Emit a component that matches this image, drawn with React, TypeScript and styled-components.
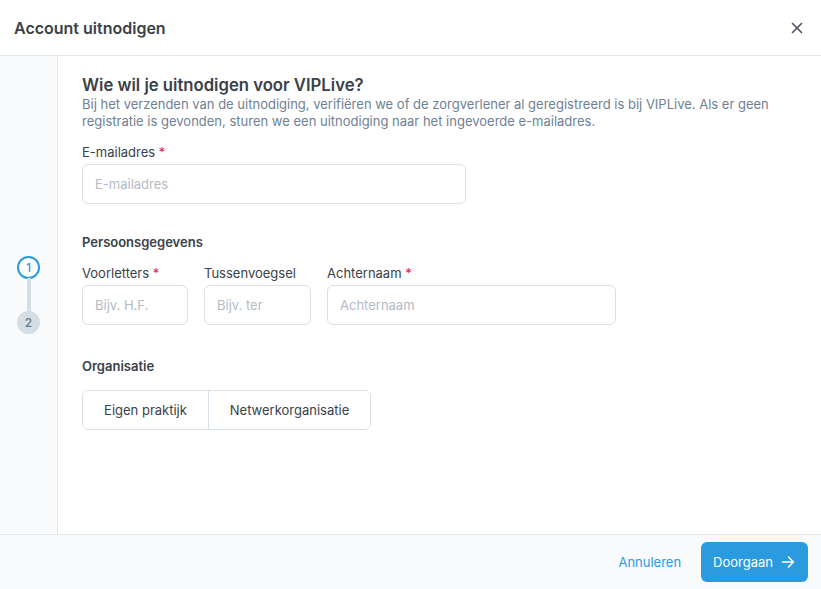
import React from 'react';
import styled, { createGlobalStyle } from 'styled-components';

const GlobalStyle = createGlobalStyle`
  html, body {
    margin: 0;
    padding: 0;
    height: 100%;
    background: #ffffff;
  }
  body {
    font-family: Inter, "Noto Sans", sans-serif;
    color: #374151;
    -webkit-font-smoothing: antialiased;
  }
  #root {
    height: 100%;
  }
  * {
    box-sizing: border-box;
  }
`;

const Dialog = styled.div`
  display: flex;
  flex-direction: column;
  width: 821px;
  height: 589px;
  background: #ffffff;
`;

const Header = styled.header`
  display: flex;
  align-items: center;
  justify-content: space-between;
  height: 56px;
  padding: 0 14px;
  border-bottom: 1px solid #e5e8eb;
  flex-shrink: 0;
`;

const Title = styled.h1`
  margin: 0;
  font-size: 16px;
  font-weight: 600;
  color: #3b4148;
`;

const CloseButton = styled.button`
  display: flex;
  align-items: center;
  justify-content: center;
  width: 24px;
  height: 24px;
  padding: 0;
  margin-right: -2px;
  border: none;
  background: transparent;
  color: #4b5259;
  cursor: pointer;
`;

const Body = styled.div`
  display: flex;
  flex: 1;
  min-height: 0;
`;

const Sidebar = styled.aside`
  width: 58px;
  flex-shrink: 0;
  background: #f8fafc;
  border-right: 1px solid #e5e8eb;
  display: flex;
  flex-direction: column;
  align-items: center;
  justify-content: center;
  padding-bottom: 1px;
`;

const Step = styled.div<{ $active?: boolean }>`
  width: 23px;
  height: 23px;
  border-radius: 50%;
  display: flex;
  align-items: center;
  justify-content: center;
  font-size: 12px;
  font-weight: 500;
  background: ${p => (p.$active ? '#ffffff' : '#d5dee5')};
  border: 2px solid ${p => (p.$active ? '#2b9be0' : '#d5dee5')};
  color: ${p => (p.$active ? '#2b9be0' : '#6b7886')};
`;

const Connector = styled.div`
  width: 4px;
  height: 34px;
  background: #d5dee5;
  margin: -1px 0;
`;

const Content = styled.main`
  flex: 1;
  padding: 19px 24px 0 24px;
`;

const Heading = styled.h2`
  margin: 0;
  font-size: 16.7px;
  font-weight: 600;
  line-height: 20px;
  color: #3b4148;
`;

const Description = styled.p`
  margin: 1px 0 0;
  font-size: 13px;
  line-height: 17px;
  color: #6f8193;
  max-width: 700px;
`;

const Field = styled.div<{ $width: number }>`
  display: flex;
  flex-direction: column;
  gap: 4px;
  width: ${p => p.$width}px;
`;

const Label = styled.label`
  font-size: 13px;
  line-height: 16px;
  color: #3b4148;
`;

const Required = styled.span`
  color: #e11d48;
`;

const Input = styled.input`
  height: 40px;
  width: 100%;
  padding: 0 12px;
  border: 1px solid #d8e0e7;
  border-radius: 6px;
  font-family: inherit;
  font-size: 13px;
  color: #374151;
  outline: none;
  &::placeholder {
    color: #b4bcc5;
  }
`;

const Section = styled.section<{ $top: number }>`
  margin-top: ${p => p.$top}px;
`;

const SectionTitle = styled.h3<{ $gap: number }>`
  margin: 0 0 ${p => p.$gap}px;
  font-size: 13px;
  font-weight: 600;
  line-height: 16px;
  color: #3b4148;
`;

const Row = styled.div`
  display: flex;
  gap: 16px;
`;

const ButtonGroup = styled.div`
  display: inline-flex;
  border: 1px solid #d8e0e7;
  border-radius: 6px;
  overflow: hidden;
`;

const GroupButton = styled.button<{ $width: number }>`
  width: ${p => p.$width}px;
  height: 38px;
  border: none;
  background: #ffffff;
  font-family: inherit;
  font-size: 13px;
  color: #3b4148;
  cursor: pointer;
  & + & {
    border-left: 1px solid #d8e0e7;
  }
`;

const Footer = styled.footer`
  display: flex;
  align-items: center;
  justify-content: flex-end;
  gap: 20px;
  height: 55px;
  padding: 0 13px;
  background: #f8fafc;
  border-top: 1px solid #e5e8eb;
  flex-shrink: 0;
`;

const LinkButton = styled.button`
  border: none;
  background: transparent;
  padding: 0;
  font-family: inherit;
  font-size: 13px;
  color: #2b9be0;
  cursor: pointer;
`;

const PrimaryButton = styled.button`
  display: flex;
  align-items: center;
  gap: 7px;
  height: 40px;
  padding: 0 12px;
  border: none;
  border-radius: 6px;
  background: #2b9be0;
  font-family: inherit;
  font-size: 13px;
  font-weight: 400;
  color: #ffffff;
  cursor: pointer;
`;

const CloseIcon = () => (
  <svg width="14" height="14" viewBox="0 0 14 14" fill="none" stroke="currentColor" strokeWidth="1.6" strokeLinecap="round">
    <path d="M2.5 2.5 L11.5 11.5 M11.5 2.5 L2.5 11.5" />
  </svg>
);

const ArrowIcon = () => (
  <svg width="16" height="16" viewBox="0 0 16 16" fill="none" stroke="currentColor" strokeWidth="1.6" strokeLinecap="round" strokeLinejoin="round">
    <path d="M2.5 8 H13.5 M8.5 3 L13.5 8 L8.5 13" />
  </svg>
);

export default function App() {
  return (
    <>
      <GlobalStyle />
      <Dialog>
        <Header>
          <Title>Account uitnodigen</Title>
          <CloseButton aria-label="Sluiten">
            <CloseIcon />
          </CloseButton>
        </Header>
        <Body>
          <Sidebar>
            <Step $active>1</Step>
            <Connector />
            <Step>2</Step>
          </Sidebar>
          <Content>
            <Heading>Wie wil je uitnodigen voor VIPLive?</Heading>
            <Description>
              Bij het verzenden van de uitnodiging, verifiëren we of de zorgverlener al geregistreerd is bij VIPLive. Als er geen
              registratie is gevonden, sturen we een uitnodiging naar het ingevoerde e-mailadres.
            </Description>
            <Section $top={14}>
              <Field $width={384}>
                <Label>
                  E-mailadres <Required>*</Required>
                </Label>
                <Input placeholder="E-mailadres" />
              </Field>
            </Section>
            <Section $top={30}>
              <SectionTitle $gap={15}>Persoonsgegevens</SectionTitle>
              <Row>
                <Field $width={106}>
                  <Label>
                    Voorletters <Required>*</Required>
                  </Label>
                  <Input placeholder="Bijv. H.F." />
                </Field>
                <Field $width={107}>
                  <Label>Tussenvoegsel</Label>
                  <Input placeholder="Bijv. ter" />
                </Field>
                <Field $width={289}>
                  <Label>
                    Achternaam <Required>*</Required>
                  </Label>
                  <Input placeholder="Achternaam" />
                </Field>
              </Row>
            </Section>
            <Section $top={33}>
              <SectionTitle $gap={16}>Organisatie</SectionTitle>
              <ButtonGroup>
                <GroupButton $width={125}>Eigen praktijk</GroupButton>
                <GroupButton $width={162}>Netwerkorganisatie</GroupButton>
              </ButtonGroup>
            </Section>
          </Content>
        </Body>
        <Footer>
          <LinkButton>Annuleren</LinkButton>
          <PrimaryButton>
            Doorgaan
            <ArrowIcon />
          </PrimaryButton>
        </Footer>
      </Dialog>
    </>
  );
}
